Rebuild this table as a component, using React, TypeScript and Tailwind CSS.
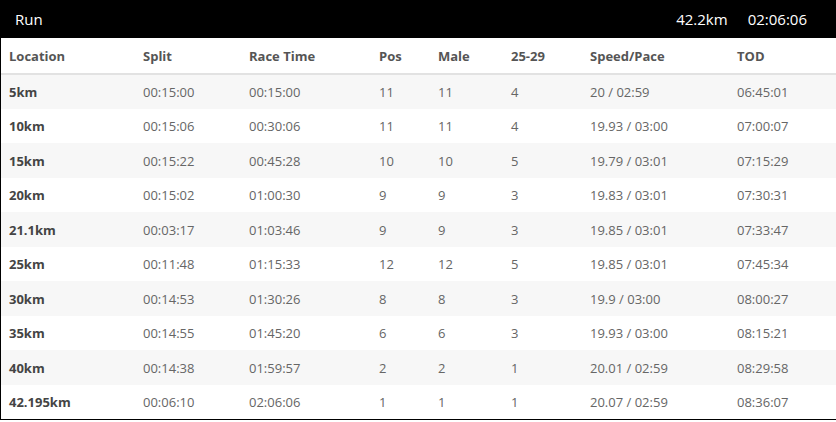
import React from 'react';

const rows = [
  ["5km", "00:15:00", "00:15:00", "11", "11", "4", "20 / 02:59", "06:45:01"],
  ["10km", "00:15:06", "00:30:06", "11", "11", "4", "19.93 / 03:00", "07:00:07"],
  ["15km", "00:15:22", "00:45:28", "10", "10", "5", "19.79 / 03:01", "07:15:29"],
  ["20km", "00:15:02", "01:00:30", "9", "9", "3", "19.83 / 03:01", "07:30:31"],
  ["21.1km", "00:03:17", "01:03:46", "9", "9", "3", "19.85 / 03:01", "07:33:47"],
  ["25km", "00:11:48", "01:15:33", "12", "12", "5", "19.85 / 03:01", "07:45:34"],
  ["30km", "00:14:53", "01:30:26", "8", "8", "3", "19.9 / 03:00", "08:00:27"],
  ["35km", "00:14:55", "01:45:20", "6", "6", "3", "19.93 / 03:00", "08:15:21"],
  ["40km", "00:14:38", "01:59:57", "2", "2", "1", "20.01 / 02:59", "08:29:58"],
  ["42.195km", "00:06:10", "02:06:06", "1", "1", "1", "20.07 / 02:59", "08:36:07"],
];

const headers = ["Location", "Split", "Race Time", "Pos", "Male", "25-29", "Speed/Pace", "TOD"];
const widths = ["w-[134px]", "w-[106px]", "w-[130px]", "w-[59px]", "w-[73px]", "w-[79px]", "w-[147px]", "w-auto"];

export default function App() {
  return (
    <div className="w-[836px] h-[422px] bg-white font-['Open_Sans',sans-serif] text-[13px]">
      <div className="h-[38px] bg-black text-white flex items-center pl-[15px] pr-[29px] text-[15px]">
        <span>Run</span>
        <span className="ml-auto">42.2km</span>
        <span className="ml-[20px]">02:06:06</span>
      </div>
      <div className="border-l border-b border-black">
        <table className="w-full table-fixed border-collapse">
          <thead>
            <tr className="h-[36px] border-b-2 border-[#e2e2e2]">
              {headers.map((h, i) => (
                <th key={h} className={`${widths[i]} text-left font-bold text-[#555] pl-2 pt-[2px] p-0`}>
                  {h}
                </th>
              ))}
            </tr>
          </thead>
          <tbody>
            {rows.map((r, ri) => (
              <tr key={r[0]} className={`h-[34.5px] ${ri % 2 === 0 ? 'bg-[#f7f7f7]' : 'bg-white'}`}>
                {r.map((c, ci) => (
                  <td key={ci} className={`pl-2 pt-[2px] p-0 ${ci === 0 ? 'font-bold text-[#444]' : 'text-[#666]'}`}>
                    {c}
                  </td>
                ))}
              </tr>
            ))}
          </tbody>
        </table>
      </div>
    </div>
  );
}
